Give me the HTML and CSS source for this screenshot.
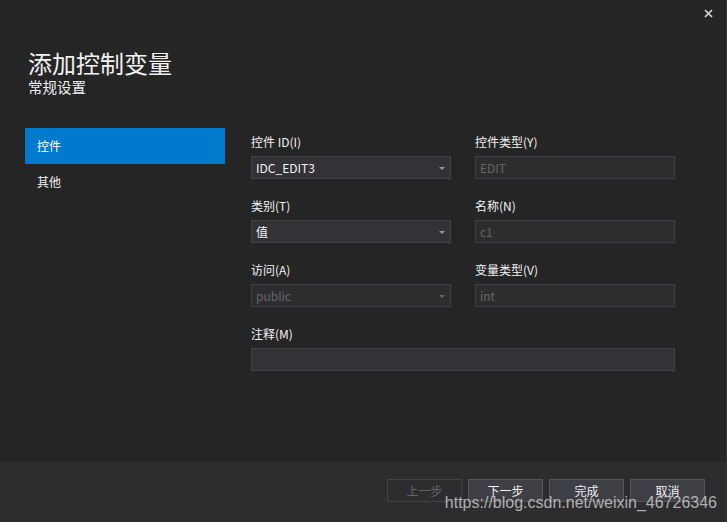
FILE: index.html
```html
<!DOCTYPE html>
<html lang="zh-CN">
<head>
<meta charset="utf-8">
<title>添加控制变量</title>
<link rel="stylesheet" href="styles.css">
</head>
<body>
<div class="dialog">
  <header class="header">
    <div class="titles">
      <h1 class="title">添加控制变量</h1>
      <div class="subtitle">常规设置</div>
    </div>
    <button class="close" aria-label="关闭">
      <svg width="9" height="9" viewBox="0 0 9 9"><path d="M1 1L8 8M8 1L1 8" stroke="#d4d4d4" stroke-width="1.7" fill="none"/></svg>
    </button>
  </header>
  <div class="main">
    <nav class="sidebar">
      <div class="nav-item active">控件</div>
      <div class="nav-item">其他</div>
    </nav>
    <section class="form">
      <div class="field">
        <label class="label">控件 ID(I)</label>
        <div class="input combo">IDC_EDIT3<span class="arrow"></span></div>
      </div>
      <div class="field">
        <label class="label">控件类型(Y)</label>
        <div class="input disabled">EDIT</div>
      </div>
      <div class="field">
        <label class="label">类别(T)</label>
        <div class="input combo">值<span class="arrow"></span></div>
      </div>
      <div class="field">
        <label class="label">名称(N)</label>
        <div class="input disabled">c1</div>
      </div>
      <div class="field">
        <label class="label">访问(A)</label>
        <div class="input combo disabled">public<span class="arrow"></span></div>
      </div>
      <div class="field">
        <label class="label">变量类型(V)</label>
        <div class="input disabled">int</div>
      </div>
      <div class="field wide">
        <label class="label">注释(M)</label>
        <div class="input note"></div>
      </div>
    </section>
  </div>
  <footer class="footer">
    <button class="btn" disabled>上一步</button>
    <button class="btn">下一步</button>
    <button class="btn">完成</button>
    <button class="btn">取消</button>
    <div class="watermark">https://blog.csdn.net/weixin_46726346</div>
  </footer>
</div>
</body>
</html>
```

FILE: styles.css
```css
* { box-sizing: border-box; }
html, body {
  margin: 0;
  padding: 0;
  background: #252526;
}
body {
  font-family: "Noto Sans CJK SC", "Noto Sans", sans-serif;
  color: #f1f1f1;
}
.dialog {
  width: 727px;
  height: 522px;
  display: flex;
  flex-direction: column;
  border-right: 1px solid #343436;
  position: relative;
}
.header {
  display: flex;
  justify-content: space-between;
  align-items: flex-start;
  padding: 0 0 0 28px;
  height: 128px;
}
.titles {
  padding-top: 48px;
}
.title {
  margin: 0;
  font-size: 24px;
  font-weight: normal;
  line-height: 30px;
  color: #f1f1f1;
}
.subtitle {
  font-size: 14.5px;
  line-height: 18px;
  color: #f1f1f1;
}
.close {
  background: none;
  border: 0;
  padding: 0;
  margin: 9px 13px 0 0;
  width: 9px;
  height: 9px;
  display: flex;
}
.main {
  flex: 1;
  display: flex;
  padding-left: 25px;
}
.sidebar {
  width: 200px;
  display: flex;
  flex-direction: column;
}
.nav-item {
  height: 36px;
  line-height: 36px;
  padding-left: 12px;
  font-size: 12px;
  color: #f1f1f1;
}
.nav-item.active {
  background: #007acc;
  color: #ffffff;
}
.form {
  margin-left: 26px;
  padding-top: 5px;
  display: grid;
  grid-template-columns: 200px 200px;
  column-gap: 24px;
  row-gap: 18px;
  align-content: start;
}
.field {
  display: flex;
  flex-direction: column;
  gap: 5px;
}
.field.wide {
  grid-column: 1 / 3;
}
.label {
  font-size: 12px;
  line-height: 18px;
  color: #f1f1f1;
}
.input {
  position: relative;
  height: 23px;
  line-height: 21px;
  padding-left: 4px;
  font-size: 12px;
  background: #333337;
  border: 1px solid #434346;
  color: #f1f1f1;
}
.input.disabled {
  background: #2d2d30;
  border-color: #3f3f46;
  color: #656565;
}
.arrow {
  position: absolute;
  right: 5px;
  top: 10px;
  width: 0;
  height: 0;
  border-left: 3px solid transparent;
  border-right: 3px solid transparent;
  border-top: 3px solid #999999;
}
.input.disabled .arrow {
  border-top-color: #656565;
}
.footer {
  position: relative;
  height: 60px;
  background: #2d2d30;
  display: flex;
  justify-content: flex-end;
  align-items: flex-start;
  gap: 6px;
  padding: 17px 21px 0 0;
}
.btn {
  width: 75px;
  height: 23px;
  font-family: "Noto Sans CJK SC", sans-serif;
  font-size: 12px;
  line-height: 21px;
  padding: 0;
  background: #3f3f46;
  border: 1px solid #555555;
  color: #f1f1f1;
}
.btn:disabled {
  background: transparent;
  border-color: #434346;
  color: #656565;
}
.watermark {
  position: absolute;
  right: 9px;
  top: 31px;
  font-family: "Liberation Sans", Arial, sans-serif;
  font-size: 16px;
  line-height: 19px;
  color: rgba(220, 220, 220, 0.75);
  white-space: nowrap;
  pointer-events: none;
}
```
